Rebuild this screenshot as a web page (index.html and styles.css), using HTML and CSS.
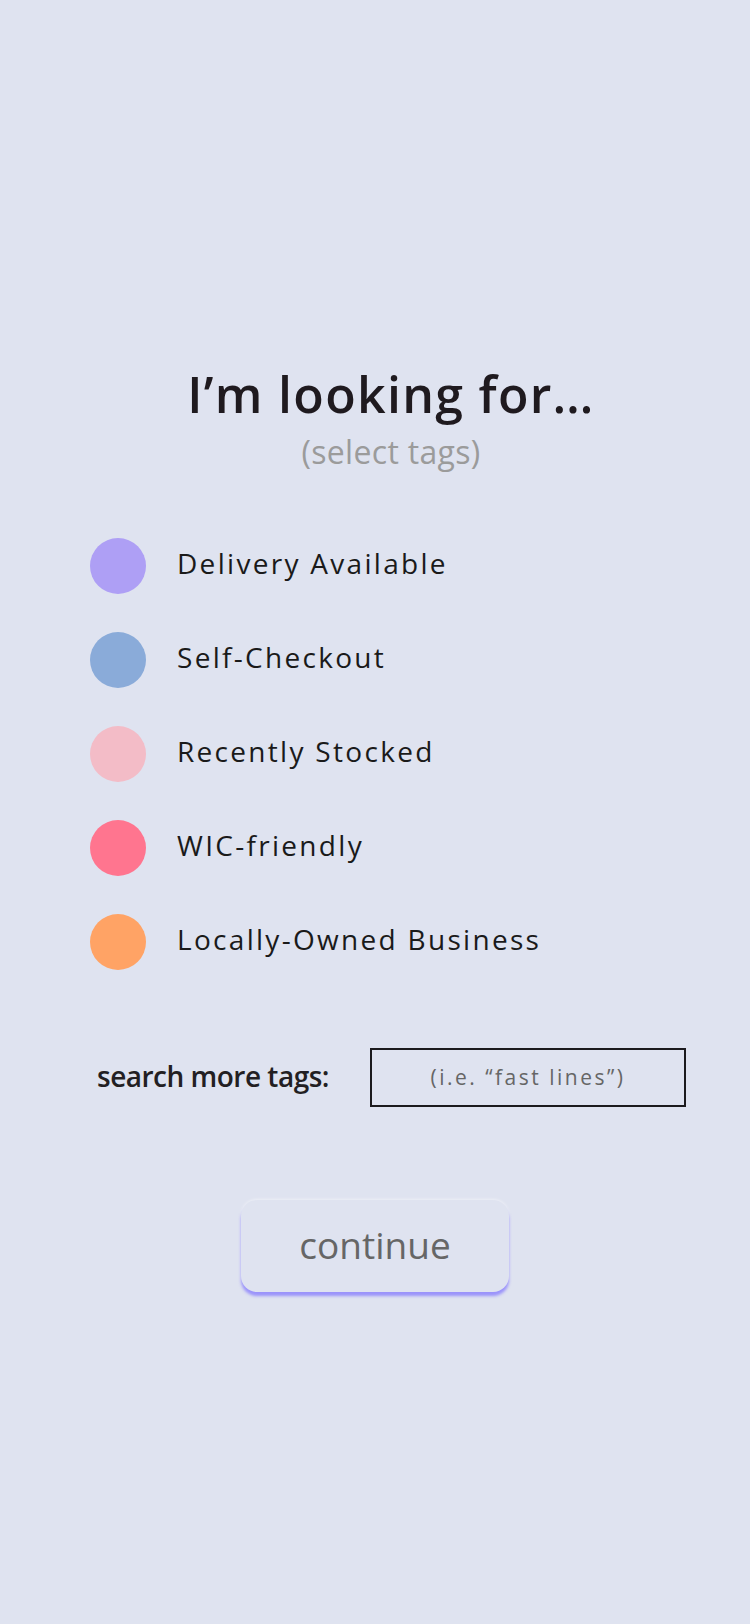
FILE: index.html
```html
<!DOCTYPE html>
<html lang="en">
<head>
<meta charset="utf-8">
<title>Tags</title>
<link rel="stylesheet" href="styles.css">
</head>
<body>
<main class="screen">
  <header class="head">
    <h1 class="title">I’m looking for…</h1>
    <p class="sub">(select tags)</p>
  </header>
  <ul class="tags">
    <li class="tag"><span class="dot dot-purple"></span><span class="label">Delivery Available</span></li>
    <li class="tag"><span class="dot dot-blue"></span><span class="label">Self-Checkout</span></li>
    <li class="tag"><span class="dot dot-pink"></span><span class="label">Recently Stocked</span></li>
    <li class="tag"><span class="dot dot-red"></span><span class="label">WIC-friendly</span></li>
    <li class="tag"><span class="dot dot-orange"></span><span class="label">Locally-Owned Business</span></li>
  </ul>
  <div class="search">
    <span class="search-label">search more tags:</span>
    <div class="search-box"><span class="placeholder">(i.e. “fast lines”)</span></div>
  </div>
  <div class="actions">
    <button class="continue" type="button">continue</button>
  </div>
</main>
</body>
</html>
```

FILE: styles.css
```css
* { box-sizing: border-box; }
html, body {
  margin: 0;
  padding: 0;
  background: #dfe3f0;
}
body {
  font-family: "Open Sans", "Noto Sans", sans-serif;
  width: 750px;
  min-height: 1624px;
}
.screen {
  display: flex;
  flex-direction: column;
  padding-top: 364px;
}
.head {
  display: flex;
  flex-direction: column;
  align-items: center;
  padding-left: 32px;
}
.title {
  margin: 0;
  font-size: 50px;
  line-height: 60px;
  font-weight: 600;
  color: #1f1a1f;
  letter-spacing: 1.3px;
}
.sub {
  margin: 10px 0 0;
  font-size: 32px;
  line-height: 36px;
  color: #9b9b9b;
  font-weight: 400;
  letter-spacing: 0.3px;
}
.tags {
  list-style: none;
  margin: 68px 0 0;
  padding: 0 0 0 90px;
  display: flex;
  flex-direction: column;
  gap: 38px;
}
.tag {
  display: flex;
  align-items: flex-start;
  gap: 31px;
}
.dot {
  width: 56px;
  height: 56px;
  border-radius: 50%;
  flex: none;
}
.dot-purple { background: #ae9ff5; }
.dot-blue { background: #8aabd9; }
.dot-pink { background: #f3bcc7; }
.dot-red { background: #ff758f; }
.dot-orange { background: #ffa365; }
.label {
  margin-top: 8px;
  font-size: 28px;
  line-height: 34px;
  letter-spacing: 2.3px;
  color: #1a1a1a;
}
.search {
  margin-top: 78px;
  display: flex;
  align-items: center;
  justify-content: space-between;
  padding: 0 64px 0 97px;
}
.search-label {
  font-size: 28px;
  line-height: 34px;
  font-weight: 600;
  color: #231f23;
  letter-spacing: -0.5px;
  margin-bottom: 4px;
}
.search-box {
  width: 316px;
  height: 59px;
  border: 2.5px solid #1c1a1e;
  display: flex;
  align-items: center;
  justify-content: center;
}
.placeholder {
  font-size: 21px;
  letter-spacing: 2.5px;
  color: #666;
  margin-bottom: 2px;
}
.actions {
  margin-top: 93px;
  display: flex;
  justify-content: center;
}
.continue {
  width: 268px;
  height: 92px;
  border: none;
  border-radius: 16px;
  background: #dfe3f0;
  font-family: "Open Sans", "Noto Sans", sans-serif;
  font-size: 37px;
  color: #666;
  box-shadow: 0 4px 3px rgba(125, 112, 255, 0.7), 0 -1px 3px rgba(255, 255, 255, 0.45);
  padding: 0 0 4px;
}
```
